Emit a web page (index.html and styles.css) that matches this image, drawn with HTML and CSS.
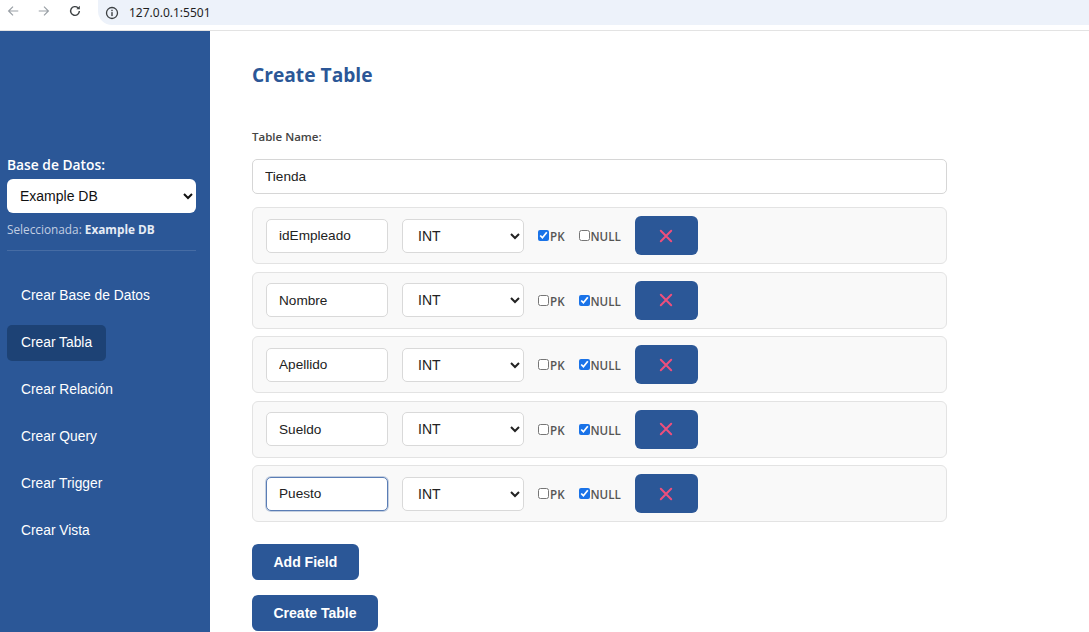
FILE: index.html
```html
<!DOCTYPE html>
<html lang="es">
<head>
<meta charset="utf-8">
<title>Create Table</title>
<link rel="stylesheet" href="styles.css">
</head>
<body>
<header class="chrome">
  <div class="nav-icons">
    <svg class="ic ic-dim" width="14" height="14" viewBox="0 0 16 16"><path d="M14 8H3M8 3L3 8l5 5" fill="none" stroke="currentColor" stroke-width="1.4"/></svg>
    <svg class="ic ic-dim" width="14" height="14" viewBox="0 0 16 16"><path d="M2 8h11M8 3l5 5-5 5" fill="none" stroke="currentColor" stroke-width="1.4"/></svg>
    <svg class="ic" width="14" height="14" viewBox="0 0 16 16"><path d="M13 8a5 5 0 1 1-1.6-3.7" fill="none" stroke="currentColor" stroke-width="1.6"/><path d="M13.5 2v4h-4z" fill="currentColor"/></svg>
  </div>
  <div class="omnibox">
    <svg class="info" width="14" height="14" viewBox="0 0 16 16"><circle cx="8" cy="8" r="6.3" fill="none" stroke="#3c4043" stroke-width="1.5"/><rect x="7.2" y="7" width="1.6" height="4.5" fill="#3c4043"/><rect x="7.2" y="4.3" width="1.6" height="1.6" fill="#3c4043"/></svg>
    <span class="url">127.0.0.1:5501</span>
  </div>
</header>
<div class="app">
  <aside class="sidebar">
    <div class="db-label">Base de Datos:</div>
    <select class="db-select"><option>Example DB</option></select>
    <div class="db-selected">Seleccionada: <strong>Example DB</strong></div>
    <hr class="divider">
    <nav class="menu">
      <a class="menu-item">Crear Base de Datos</a>
      <a class="menu-item active">Crear Tabla</a>
      <a class="menu-item">Crear Relación</a>
      <a class="menu-item">Crear Query</a>
      <a class="menu-item">Crear Trigger</a>
      <a class="menu-item">Crear Vista</a>
    </nav>
  </aside>
  <main class="main">
    <h2 class="title">Create Table</h2>
    <label class="field-label">Table Name:</label>
    <input class="table-name" type="text" value="Tienda">
    <div class="fields">
      <div class="field-row">
        <input class="fname" type="text" value="idEmpleado">
        <select class="ftype"><option>INT</option></select>
        <label class="chk"><input type="checkbox" checked>PK</label>
        <label class="chk"><input type="checkbox">NULL</label>
        <button class="del"><svg width="14" height="14" viewBox="0 0 14 14"><path d="M1.8 1.8l10.4 10.4M12.2 1.8L1.8 12.2" stroke="#ee4f7c" stroke-width="2" stroke-linecap="round"/></svg></button>
      </div>
      <div class="field-row">
        <input class="fname" type="text" value="Nombre">
        <select class="ftype"><option>INT</option></select>
        <label class="chk"><input type="checkbox">PK</label>
        <label class="chk"><input type="checkbox" checked>NULL</label>
        <button class="del"><svg width="14" height="14" viewBox="0 0 14 14"><path d="M1.8 1.8l10.4 10.4M12.2 1.8L1.8 12.2" stroke="#ee4f7c" stroke-width="2" stroke-linecap="round"/></svg></button>
      </div>
      <div class="field-row">
        <input class="fname" type="text" value="Apellido">
        <select class="ftype"><option>INT</option></select>
        <label class="chk"><input type="checkbox">PK</label>
        <label class="chk"><input type="checkbox" checked>NULL</label>
        <button class="del"><svg width="14" height="14" viewBox="0 0 14 14"><path d="M1.8 1.8l10.4 10.4M12.2 1.8L1.8 12.2" stroke="#ee4f7c" stroke-width="2" stroke-linecap="round"/></svg></button>
      </div>
      <div class="field-row">
        <input class="fname" type="text" value="Sueldo">
        <select class="ftype"><option>INT</option></select>
        <label class="chk"><input type="checkbox">PK</label>
        <label class="chk"><input type="checkbox" checked>NULL</label>
        <button class="del"><svg width="14" height="14" viewBox="0 0 14 14"><path d="M1.8 1.8l10.4 10.4M12.2 1.8L1.8 12.2" stroke="#ee4f7c" stroke-width="2" stroke-linecap="round"/></svg></button>
      </div>
      <div class="field-row">
        <input class="fname focused" type="text" value="Puesto">
        <select class="ftype"><option>INT</option></select>
        <label class="chk"><input type="checkbox">PK</label>
        <label class="chk"><input type="checkbox" checked>NULL</label>
        <button class="del"><svg width="14" height="14" viewBox="0 0 14 14"><path d="M1.8 1.8l10.4 10.4M12.2 1.8L1.8 12.2" stroke="#ee4f7c" stroke-width="2" stroke-linecap="round"/></svg></button>
      </div>
    </div>
    <div class="actions">
      <button class="btn">Add Field</button>
      <button class="btn">Create Table</button>
    </div>
  </main>
</div>
</body>
</html>
```
FILE: styles.css
```css
* { box-sizing: border-box; }
html, body { margin: 0; padding: 0; height: 100%; }
body {
  font-family: "Liberation Sans", Arial, sans-serif;
  background: #fff;
  overflow: hidden;
}
.chrome {
  height: 31px;
  display: flex;
  align-items: flex-start;
  background: #fff;
  border-bottom: 1px solid #e3e3e3;
}
.nav-icons {
  display: flex;
  gap: 17px;
  padding: 4px 0 0 6px;
  width: 98px;
  color: #3c4043;
}
.ic-dim { color: #9aa0a6; }
.omnibox {
  flex: 1;
  height: 25px;
  background: #edf2fa;
  border-radius: 0 0 0 14px;
  display: flex;
  align-items: center;
  padding-left: 7px;
  gap: 10px;
}
.url {
  font-family: "Noto Sans", "Open Sans", sans-serif;
  font-size: 12px;
  color: #1f1f1f;
}
.app {
  display: flex;
  height: calc(100% - 31px);
}
.sidebar {
  width: 210px;
  flex: none;
  background: #2b5797;
  padding: 124px 14px 0 7px;
  color: #fff;
}
.db-label {
  font-family: "Open Sans", "Noto Sans", sans-serif;
  font-weight: 600;
  font-size: 13.8px;
  line-height: 20px;
  margin-bottom: 4px;
}
.db-select {
  width: 189px;
  height: 34px;
  border: none;
  border-radius: 6px;
  background: #fff;
  font-family: "Liberation Sans", Arial, sans-serif;
  font-size: 14px;
  color: #111;
  padding: 0 6px 0 9px;
}
.db-selected {
  font-family: "Open Sans", "Noto Sans", sans-serif;
  font-size: 11.8px;
  color: #c2cee2;
  margin-top: 7px;
  line-height: 18px;
}
.db-selected strong { color: #e6ecf5; font-weight: 700; }
.divider {
  border: none;
  border-top: 1px solid rgba(255,255,255,0.13);
  margin: 12px 0 0 0;
}
.menu {
  display: flex;
  flex-direction: column;
  gap: 11px;
  margin-top: 27px;
  align-items: flex-start;
}
.menu-item {
  display: block;
  height: 36px;
  line-height: 36px;
  padding: 0 14px;
  font-size: 13.8px;
  color: #fff;
  border-radius: 5px;
}
.menu-item.active { background: #1d4275; }
.main {
  flex: 1;
  padding: 30px 0 0 42px;
}
.title {
  margin: 0;
  font-family: "Open Sans", "Noto Sans", sans-serif;
  font-weight: 700;
  font-size: 19.2px;
  line-height: 28px;
  color: #2b5797;
}
.field-label {
  display: block;
  margin-top: 40px;
  font-family: "Open Sans", "Noto Sans", sans-serif;
  font-size: 11.5px;
  font-weight: 600;
  color: #444;
  line-height: 16px;
}
.table-name {
  display: block;
  margin-top: 14px;
  width: 695px;
  height: 35px;
  border: 1px solid #d6d6d6;
  border-radius: 5px;
  padding: 0 12px;
  font-family: "Liberation Sans", Arial, sans-serif;
  font-size: 13.6px;
  color: #222;
}
.fields {
  display: flex;
  flex-direction: column;
  gap: 7.5px;
  margin-top: 13px;
  width: 695px;
}
.field-row {
  height: 57px;
  background: #f9f9f9;
  border: 1px solid #e3e3e3;
  border-radius: 6px;
  display: flex;
  align-items: center;
  padding: 0 13px;
  gap: 14px;
}
.fname {
  width: 122px;
  height: 34px;
  border: 1px solid #d9d9d9;
  border-radius: 5px;
  background: #fff;
  padding: 0 12px;
  font-family: "Liberation Sans", Arial, sans-serif;
  font-size: 13.6px;
  color: #222;
}
.fname.focused {
  border: 1px solid #5a7db5;
  box-shadow: 0 0 0 1px rgba(43,87,151,0.25);
  outline: none;
}
.ftype {
  width: 122px;
  height: 34px;
  border: 1px solid #d9d9d9;
  border-radius: 5px;
  background: #fff;
  padding: 0 5px 0 11px;
  font-family: "Liberation Sans", Arial, sans-serif;
  font-size: 14px;
  color: #222;
}
.chk {
  display: flex;
  align-items: flex-start;
  padding-top: 3px;
  font-family: "Open Sans", "Noto Sans", sans-serif;
  font-weight: 600;
  font-size: 11.6px;
  color: #555;
  line-height: 18px;
}
.chk input {
  width: 11px;
  height: 11px;
  margin: 2px 1px 0 0;
  accent-color: #1a73e8;
}
.del {
  width: 63px;
  height: 39px;
  border: none;
  border-radius: 6px;
  background: #2b5797;
  display: flex;
  align-items: center;
  justify-content: center;
  padding: 0;
}
.actions {
  display: flex;
  flex-direction: column;
  align-items: flex-start;
  gap: 15px;
  margin-top: 22px;
}
.btn {
  height: 36px;
  border: none;
  border-radius: 6px;
  background: #2b5797;
  color: #fff;
  font-family: "Liberation Sans", Arial, sans-serif;
  font-weight: 700;
  font-size: 14px;
  padding: 0 21.5px;
}
```
